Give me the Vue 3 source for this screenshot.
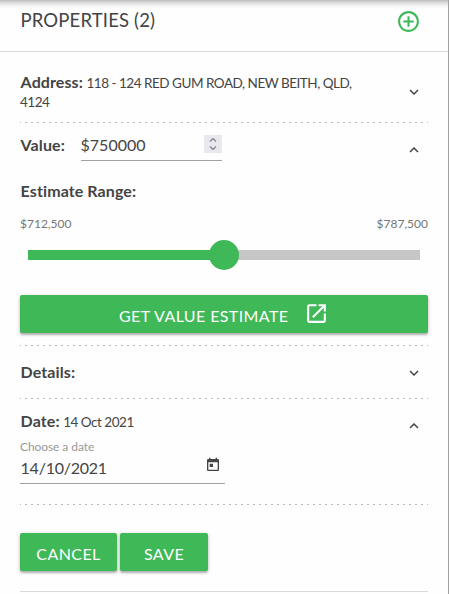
<script setup>
    import { ref, computed } from 'vue';

    const address = ref('118 - 124 RED GUM ROAD, NEW BEITH, QLD, 4124');
    const value = ref(750000);
    const minValue = 712500;
    const maxValue = 787500;
    const date = ref('14/10/2021');

    const percent = computed(() => {
        return (value.value - minValue) / (maxValue - minValue) * 100;
    });

    const money = (amount) => {
        return '$' + amount.toLocaleString('en-US');
    }

    const step = (amount) => {
        value.value = Math.min(maxValue, Math.max(minValue, value.value + amount));
    }
</script>

<template>
    <div class="panel">
        <header class="header">
            <h1 class="title">PROPERTIES (2)</h1>
            <svg class="add" viewBox="0 0 24 24">
                <path d="M13 7h-2v4H7v2h4v4h2v-4h4v-2h-4V7zm-1-5C6.48 2 2 6.48 2 12s4.48 10 10 10 10-4.48 10-10S17.52 2 12 2zm0 18c-4.41 0-8-3.59-8-8s3.59-8 8-8 8 3.59 8 8-3.59 8-8 8z" />
            </svg>
        </header>

        <main class="content">
            <section class="section address">
                <p class="text"><b class="label">Address:</b> <span class="detail">{{ address }}</span></p>
                <svg class="chevron" viewBox="0 0 10 6"><path d="M1 1l4 4 4-4" /></svg>
            </section>

            <section class="section value">
                <b class="label">Value:</b>
                <div class="number">
                    <span class="input-text">${{ value }}</span>
                    <div class="spinner">
                        <svg viewBox="0 0 8 4" @click="step(1000)"><path d="M1 3.5l3-3 3 3" /></svg>
                        <svg viewBox="0 0 8 4" @click="step(-1000)"><path d="M1 .5l3 3 3-3" /></svg>
                    </div>
                </div>
                <svg class="chevron" viewBox="0 0 10 6"><path d="M1 5l4-4 4 4" /></svg>
            </section>

            <section class="estimate">
                <b class="label">Estimate Range:</b>
                <div class="range">
                    <span>{{ money(minValue) }}</span>
                    <span>{{ money(maxValue) }}</span>
                </div>
                <div class="slider">
                    <div class="fill" :style="{ width: percent + '%' }"></div>
                    <div class="thumb" :style="{ left: percent + '%' }"></div>
                </div>
                <button class="button wide">
                    <span>GET VALUE ESTIMATE</span>
                    <svg class="launch" viewBox="0 0 24 24">
                        <path d="M19 19H5V5h7V3H5c-1.11 0-2 .9-2 2v14c0 1.1.89 2 2 2h14c1.1 0 2-.9 2-2v-7h-2v7zM14 3v2h3.59l-9.83 9.83 1.41 1.41L19 6.41V10h2V3h-7z" />
                    </svg>
                </button>
            </section>

            <section class="section details">
                <b class="label">Details:</b>
                <svg class="chevron" viewBox="0 0 10 6"><path d="M1 1l4 4 4-4" /></svg>
            </section>

            <section class="section date">
                <div class="date-main">
                    <p class="text"><b class="label">Date:</b> <span class="detail">14 Oct 2021</span></p>
                    <label class="hint">Choose a date</label>
                    <div class="date-input">
                        <span class="input-text">{{ date }}</span>
                        <svg class="calendar" viewBox="0 0 24 24">
                            <path d="M19 3h-1V1h-2v2H8V1H6v2H5c-1.11 0-1.99.9-1.99 2L3 19c0 1.1.89 2 2 2h14c1.1 0 2-.9 2-2V5c0-1.1-.9-2-2-2zm0 16H5V8h14v11zM7 10h5v5H7z" />
                        </svg>
                    </div>
                </div>
                <svg class="chevron" viewBox="0 0 10 6"><path d="M1 5l4-4 4 4" /></svg>
            </section>

            <footer class="actions">
                <button class="button cancel">CANCEL</button>
                <button class="button save">SAVE</button>
            </footer>
        </main>
    </div>
</template>

<style>
    body{
        margin: 0;
        background: #fefefe;
    }
</style>

<style scoped>
    .panel{
        box-sizing: border-box;
        width: 449px;
        height: 594px;
        overflow: hidden;
        border-right: 1px solid #a0a0a0;
        background: linear-gradient(#bdbdbd, #dedede 3px, #f5f5f5 6px, #fefefe 9px) no-repeat 0 0 / 100% 9px, #fefefe;
        color: #444;
        font-family: Lato, sans-serif;
        font-size: 16px;
    }
    .header{
        display: flex;
        justify-content: space-between;
        box-sizing: border-box;
        height: 52px;
        padding: 9px 27px 0 20.5px;
        border-bottom: 1px solid #dadada;
    }
    .title{
        margin: 0;
        font-size: 18.5px;
        font-weight: 400;
        line-height: 23px;
        letter-spacing: 0.15px;
    }
    .add{
        width: 25px;
        height: 25px;
        fill: #3fb858;
    }
    .content{
        padding: 20px 20px 0;
    }
    .section{
        display: flex;
        box-sizing: border-box;
        background: repeating-linear-gradient(90deg, #bbb 0 1px, transparent 1px 5px, #bbb 5px 6px) no-repeat 0 100% / 100% 1px;
    }
    .label{
        padding-left: 0.6px;
        font-weight: 700;
        letter-spacing: 0.1px;
    }
    .text{
        margin: 0;
        line-height: 20px;
    }
    .detail{
        margin-left: -0.6px;
        font-size: 13.5px;
        letter-spacing: -0.48px;
    }
    .chevron{
        flex: none;
        width: 10px;
        height: 6px;
        margin-left: auto;
        margin-right: 9px;
        fill: none;
        stroke: #444;
        stroke-width: 1.5;
    }
    .address{
        height: 51px;
    }
    .address .text{
        width: 350px;
        padding-top: 1px;
        line-height: 18px;
    }
    .address .chevron{
        margin-top: 16.5px;
    }
    .value{
        height: 48px;
        padding-top: 9px;
        background: none;
        line-height: 26px;
    }
    .value .chevron{
        margin-top: 14.5px;
    }
    .number{
        display: flex;
        justify-content: space-between;
        box-sizing: border-box;
        width: 141px;
        height: 29px;
        margin-left: 16.2px;
        border-bottom: 1px solid #a0a0a0;
    }
    .value .input-text{
        margin-left: -0.5px;
    }
    .spinner{
        display: flex;
        flex-direction: column;
        align-items: center;
        justify-content: center;
        gap: 4px;
        width: 18px;
        height: 18px;
        margin-top: 3px;
        background: #e9e9ed;
    }
    .spinner svg{
        width: 8px;
        height: 4px;
        fill: none;
        stroke: #8f8f9d;
        stroke-width: 1.5;
    }
    .estimate{
        box-sizing: border-box;
        height: 175px;
        padding-top: 10px;
        background: repeating-linear-gradient(90deg, #bbb 0 1px, transparent 1px 5px, #bbb 5px 6px) no-repeat 0 100% / 100% 1px;
    }
    .estimate .label{
        display: block;
        line-height: 20px;
    }
    .range{
        display: flex;
        justify-content: space-between;
        margin-top: 15px;
        color: #777;
        font-size: 12px;
        line-height: 16px;
    }
    .slider{
        position: relative;
        height: 10px;
        margin: 18px 8px 0;
        background: #c6c6c6;
    }
    .fill{
        height: 10px;
        background: #3fb858;
    }
    .thumb{
        position: absolute;
        top: -10px;
        width: 30px;
        height: 30px;
        margin-left: -15px;
        border-radius: 50%;
        background: #3fb858;
    }
    .button{
        display: flex;
        align-items: center;
        justify-content: center;
        box-sizing: border-box;
        height: 38px;
        padding: 4px 0 0;
        border: 0;
        border-radius: 2px;
        background: #3fb858;
        box-shadow: 0 2px 2px rgba(0, 0, 0, 0.22), 0 1px 4px rgba(0, 0, 0, 0.18);
        color: #fefefe;
        font-family: inherit;
        font-size: 16px;
        line-height: 18px;
        letter-spacing: 0.4px;
    }
    .wide{
        width: 100%;
        margin-top: 35px;
    }
    .launch{
        width: 25px;
        height: 25px;
        margin: -6px 0 0 15.5px;
        fill: #fefefe;
    }
    .details{
        height: 53px;
        padding-top: 16px;
        line-height: 20px;
    }
    .details .chevron{
        margin-top: 7.5px;
    }
    .date{
        height: 106px;
        padding-top: 12px;
    }
    .date .chevron{
        margin-top: 11.5px;
    }
    .date-main{
        width: 205px;
    }
    .hint{
        display: block;
        margin-top: 8px;
        color: #999;
        font-size: 12px;
        line-height: 14px;
        letter-spacing: -0.08px;
    }
    .date-input{
        display: flex;
        justify-content: space-between;
        box-sizing: border-box;
        height: 30px;
        padding-right: 4px;
        border-bottom: 1px solid #a0a0a0;
        line-height: 28px;
    }
    .date-input .input-text{
        padding-left: 0.6px;
        letter-spacing: -0.25px;
    }
    .calendar{
        width: 16px;
        height: 16px;
        margin-top: 3px;
        fill: #444;
    }
    .actions{
        display: flex;
        gap: 3px;
        box-sizing: border-box;
        height: 87px;
        padding-top: 28px;
        border-bottom: 1px solid #dadada;
    }
    .cancel{
        width: 97px;
    }
    .save{
        width: 88px;
    }
</style>
